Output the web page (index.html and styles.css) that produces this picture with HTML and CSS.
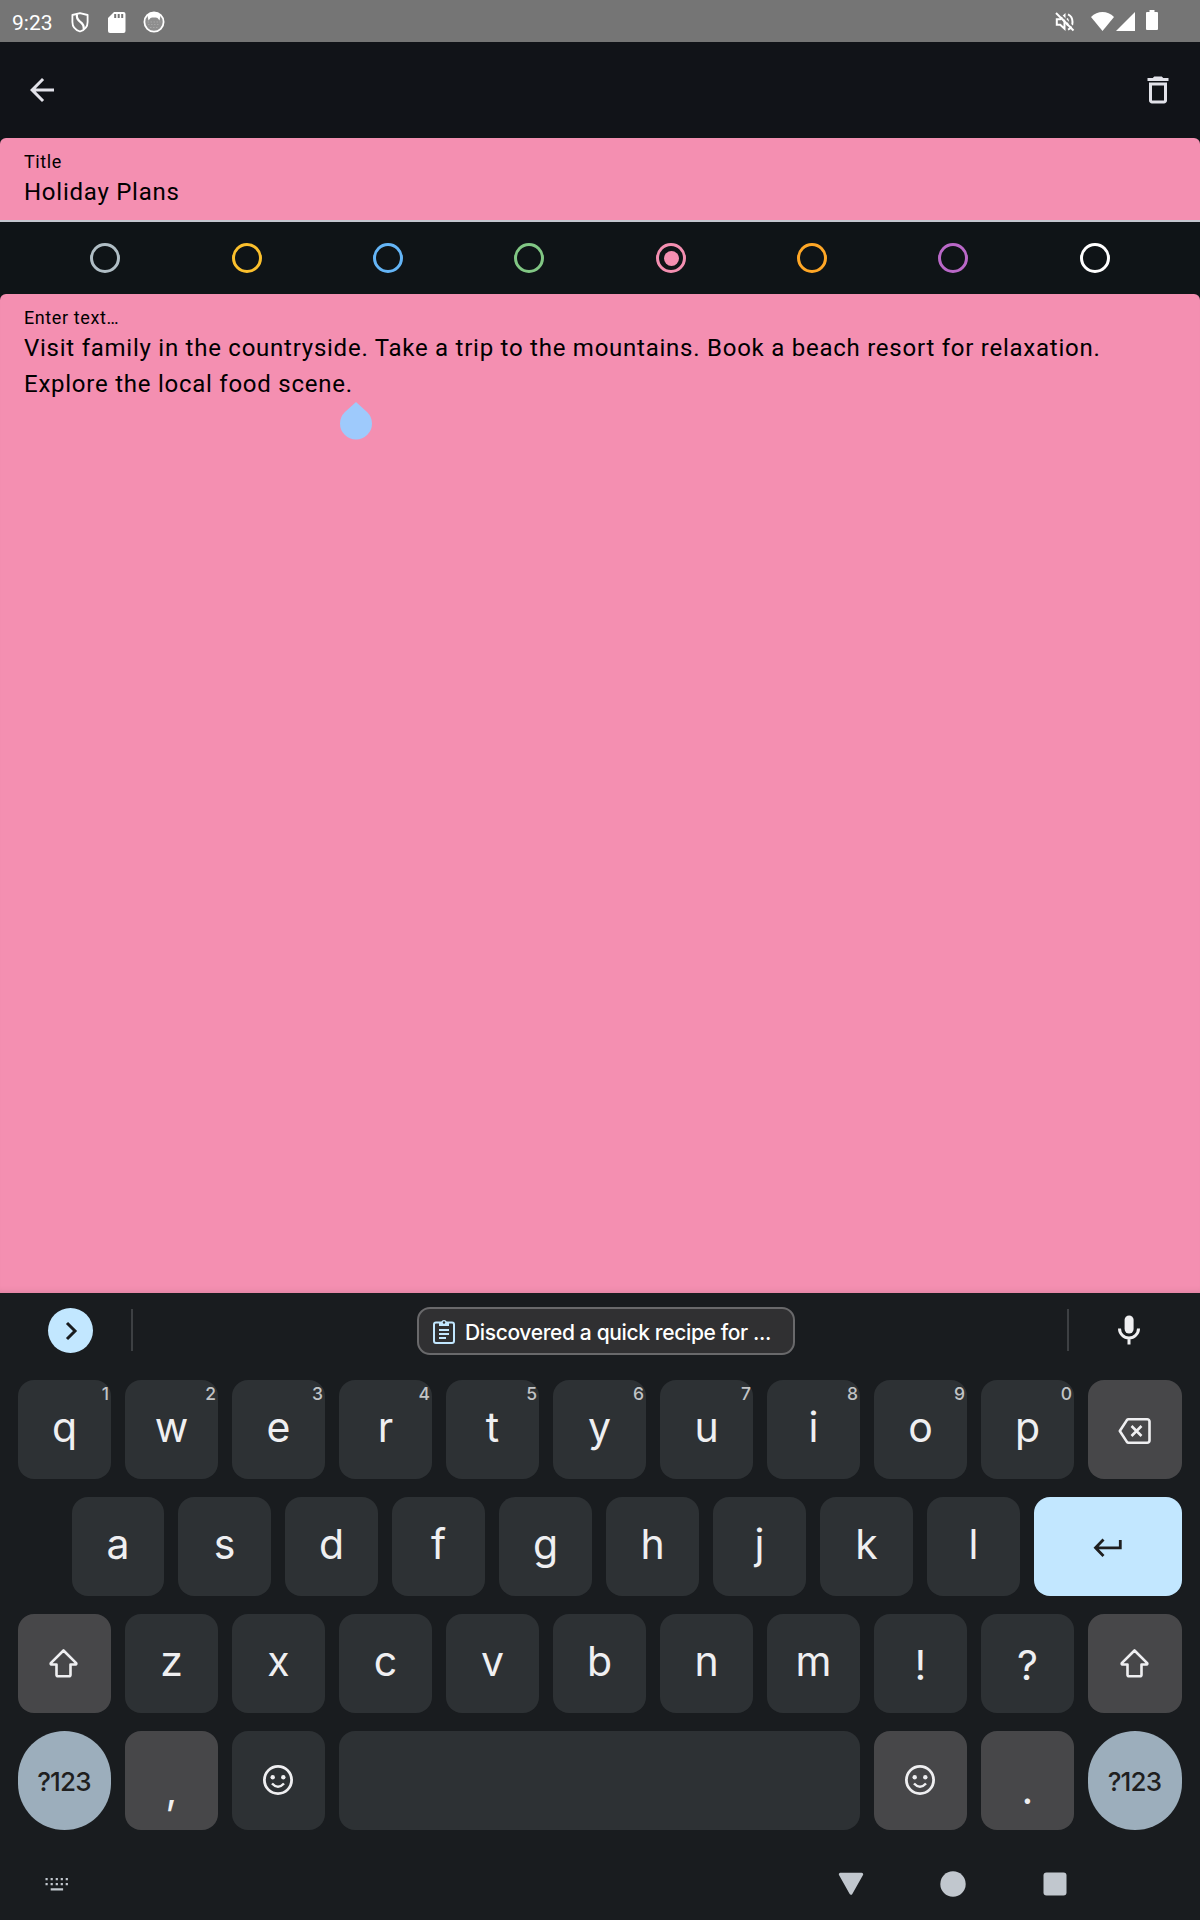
FILE: index.html
```html
<!DOCTYPE html>
<html lang="en">
<head>
<meta charset="utf-8">
<title>Holiday Plans</title>
<link rel="stylesheet" href="styles.css">
</head>
<body>
<div class="screen">
  <header class="status">
    <span class="clock">9:23</span>
    <svg class="st-shield" width="18" height="21" viewBox="0 0 18 21" fill="none" stroke="#fff" stroke-width="1.8" stroke-linejoin="round"><path d="M9 1.2 16.600 3v7c0 4.500-3 8-7.600 9.500C4.400 18 1.400 14.500 1.400 10V3z"/><path d="M6 2.300c-.8 3.400.4 5.300 3 7.300 2.800 2 4.200 4 3.600 7.400" stroke-width="2.200"/></svg>
    <svg class="st-sd" width="18" height="21" viewBox="0 0 18 21"><path fill="#fff" d="M6 0h9.500A2 2 0 0 1 17.500 2v17a2 2 0 0 1-2 2h-13.500a2 2 0 0 1-2-2V6z"/><path fill="#757575" d="M6.200 2h2v4h-2zM9.700 2h2v4h-2zM13.200 2h2v4h-2z"/></svg>
    <svg class="st-face" width="22" height="22" viewBox="0 0 22 22"><circle cx="11" cy="11" r="9.600" fill="#8e8e8e" stroke="#fff" stroke-width="1.800"/><path fill="#fff" d="M4.500 4.500C8 .5 14 .5 17.500 4.500l-1 5-2-2.500c-2-.6-5-.6-7 0l-2 2.500z"/><path stroke="#a4a4a4" stroke-width="1" stroke-dasharray="1.500 1.500" d="M4.500 11h13M5 13.500h12M7 16.500h8"/></svg>
    <span class="grow"></span>
    <svg class="st-mute" width="20" height="20" viewBox="0 0 20 20" fill="none" stroke="#fff" stroke-width="2"><path d="M1.800 7.200h3.400l4.300-4v13.600l-4.300-4H1.800z"/><path d="M12 6.500q2 3.500 0 7M13 2.300c6 2.700 6 12.700 0 15.400"/><path stroke="#757575" stroke-width="1.600" d="M3 0 20 17"/><path d="M1 1l17.500 17.500"/></svg>
    <svg class="st-wifi" width="23" height="19" viewBox="0 0 23 19"><path fill="#fff" d="M11.500 19 0 4.900C6.500-1.600 16.500-1.600 23 4.900z"/></svg>
    <svg class="st-cell" width="19" height="19" viewBox="0 0 19 19"><path fill="#fff" d="M19 0v19H0z"/></svg>
    <svg class="st-batt" width="12" height="20" viewBox="0 0 12 20"><path fill="#fff" d="M3.500 0h5v2H11a1 1 0 0 1 1 1v16a1 1 0 0 1-1 1H1a1 1 0 0 1-1-1V3a1 1 0 0 1 1-1h2.500z"/></svg>
  </header>

  <nav class="appbar">
    <svg width="36" height="36" viewBox="0 0 24 24" fill="#e2e2e9"><path d="M20 11H7.830l5.590-5.590L12 4l-8 8 8 8 1.410-1.410L7.830 13H20z"/></svg>
    <svg width="36" height="36" viewBox="0 0 24 24" fill="#e2e2e9"><path d="M6 19c0 1.100.9 2 2 2h8c1.100 0 2-.9 2-2V7H6v12zM8 9h8v10H8V9zM15.500 4l-1-1h-5l-1 1H5v2h14V4z"/></svg>
  </nav>

  <section class="field title">
    <div class="label">Title</div>
    <div class="value">Holiday Plans</div>
  </section>

  <div class="colors">
    <div class="slot"><i class="radio grey"></i></div>
    <div class="slot"><i class="radio yellow"></i></div>
    <div class="slot"><i class="radio blue"></i></div>
    <div class="slot"><i class="radio green"></i></div>
    <div class="slot"><i class="radio pink on"></i></div>
    <div class="slot"><i class="radio orange"></i></div>
    <div class="slot"><i class="radio purple"></i></div>
    <div class="slot"><i class="radio white"></i></div>
  </div>

  <section class="field note">
    <div class="label">Enter text…</div>
    <div class="value">Visit family in the countryside. Take a trip to the mountains. Book a beach resort for relaxation.<br>Explore the local food scene.<span class="caret"><svg class="handle" width="32" height="38" viewBox="0 0 32 38"><path fill="#9ecafc" d="M16 0 27.300 10.200a16 16 0 1 1-22.600 0z"/></svg></span></div>
  </section>

  <section class="keyboard">
    <div class="strip">
      <div class="expand"><svg width="45" height="45" viewBox="0 0 45 45" fill="none" stroke="#191c1e" stroke-width="3"><path d="M19 15l8 8-8 8"/></svg></div>
      <i class="rule"></i>
      <div class="middle">
        <div class="chip">
          <svg width="22" height="25" viewBox="0 0 22 25"><rect x="1" y="3.500" width="20" height="20.500" rx="2" fill="none" stroke="#c2e7ff" stroke-width="2"/><path fill="#c2e7ff" d="M6 3h2.200a3 3 0 0 1 5.600 0H16v4H6zM6 10h10v2H6zM6 14h10v2H6zM6 18h7v2H6z"/><circle cx="11" cy="3.500" r="1.200" fill="#303032"/></svg>
          <span>Discovered a quick recipe for ...</span>
        </div>
      </div>
      <i class="rule"></i>
      <svg class="mic" width="22" height="30" viewBox="0 0 22 30"><rect x="6.600" y=".5" width="9" height="18" rx="4.500" fill="#efeff1"/><path d="M1.500 13.500a9.500 9.500 0 0 0 19 0M11 23v6.500" fill="none" stroke="#efeff1" stroke-width="3"/></svg>
    </div>

    <div class="row">
      <div class="key">q<sup>1</sup></div><div class="key">w<sup>2</sup></div><div class="key">e<sup>3</sup></div><div class="key">r<sup>4</sup></div><div class="key">t<sup>5</sup></div><div class="key">y<sup>6</sup></div><div class="key">u<sup>7</sup></div><div class="key">i<sup>8</sup></div><div class="key">o<sup>9</sup></div><div class="key">p<sup>0</sup></div>
      <div class="key fn last icon"><svg width="34" height="30" viewBox="0 0 34 30" fill="none" stroke="#efeff1" stroke-width="2.600" stroke-linejoin="round"><path d="M10.500 3.300h18.700a2.300 2.300 0 0 1 2.300 2.300v18.800a2.300 2.300 0 0 1-2.300 2.300H10.500a2 2 0 0 1-1.600-.8L1.800 15l7.100-10.900a2 2 0 0 1 1.600-.8z"/><path d="M13.500 10l10 10m0-10-10 10"/></svg></div>
    </div>

    <div class="row second">
      <div class="key">a</div><div class="key">s</div><div class="key">d</div><div class="key">f</div><div class="key">g</div><div class="key">h</div><div class="key">j</div><div class="key">k</div><div class="key">l</div>
      <div class="key enter last icon"><svg width="30" height="20" viewBox="0 0 30 20" fill="none" stroke="#1f1f1f" stroke-width="2.800"><path d="M10.500 1.500 2.500 9.800l8 8.200M2.500 9.800h24.800V2"/></svg></div>
    </div>

    <div class="row">
      <div class="key fn icon"><svg class="shift" width="32" height="32" viewBox="0 0 32 32" fill="none" stroke="#efeff1" stroke-width="2.600" stroke-linejoin="round"><path d="M15.500 3.500 2.800 16.200q-.5 1 .7 1.300h5v10.300a1.500 1.500 0 0 0 1.500 1.500h11a1.500 1.500 0 0 0 1.500-1.500V17.500h5q1.200-.3.7-1.300z"/></svg></div>
      <div class="key">z</div><div class="key">x</div><div class="key">c</div><div class="key">v</div><div class="key">b</div><div class="key">n</div><div class="key">m</div><div class="key mark">!</div><div class="key mark">?</div>
      <div class="key fn last icon"><svg class="shift" width="32" height="32" viewBox="0 0 32 32" fill="none" stroke="#efeff1" stroke-width="2.600" stroke-linejoin="round"><path d="M15.500 3.500 2.800 16.200q-.5 1 .7 1.300h5v10.300a1.500 1.500 0 0 0 1.500 1.500h11a1.500 1.500 0 0 0 1.500-1.500V17.500h5q1.200-.3.7-1.300z"/></svg></div>
    </div>

    <div class="row">
      <div class="key sym">?123</div>
      <div class="key fn punct">,</div>
      <div class="key icon"><svg class="smile" width="32" height="32" viewBox="0 0 32 32" fill="none" stroke="#efeff1" stroke-width="2.800"><circle cx="16" cy="16" r="13.600"/><path d="M10 19.500q6 6.500 12 0" stroke-width="2.500"/><g fill="#efeff1" stroke="none"><circle cx="10.700" cy="13.200" r="2.200"/><circle cx="21.300" cy="13.200" r="2.200"/></g></svg></div>
      <div class="key space"></div>
      <div class="key fn icon"><svg class="smile" width="32" height="32" viewBox="0 0 32 32" fill="none" stroke="#efeff1" stroke-width="2.800"><circle cx="16" cy="16" r="13.600"/><path d="M10 19.500q6 6.500 12 0" stroke-width="2.500"/><g fill="#efeff1" stroke="none"><circle cx="10.700" cy="13.200" r="2.200"/><circle cx="21.300" cy="13.200" r="2.200"/></g></svg></div>
      <div class="key fn punct">.</div>
      <div class="key sym last">?123</div>
    </div>

    <footer class="navbar">
      <svg width="24" height="14" viewBox="0 0 24 14" fill="#c1c7ce"><path d="M.5 1h2.200v2.200H.5zM5.600 1h2.200v2.200H5.600zM10.700 1h2.200v2.200h-2.200zM15.700 1h2.200v2.200h-2.200zM20.700 1h2.200v2.200h-2.200zM.5 6h2.200v2.200H.5zM5.600 6h2.200v2.200H5.600zM10.700 6h2.200v2.200h-2.200zM15.700 6h2.200v2.200h-2.200zM20.700 6h2.200v2.200h-2.200zM5.700 11.200h12.400v2.300H5.700z"/></svg>
      <span class="grow"></span>
      <svg width="26" height="26" viewBox="0 0 26 26" fill="#c1c7ce" stroke="#c1c7ce" stroke-width="3" stroke-linejoin="round"><path d="M2.300 3.300h21.400L13 22.300z"/></svg>
      <svg width="26" height="26" viewBox="0 0 26 26" fill="#c1c7ce"><circle cx="13" cy="13" r="12.700"/></svg>
      <svg width="26" height="26" viewBox="0 0 26 26" fill="#c1c7ce"><rect x="1.500" y="1.500" width="23" height="23" rx="3"/></svg>
    </footer>
  </section>
</div>
</body>
</html>
```
FILE: styles.css
```css
* { box-sizing: border-box; }
body { margin: 0; background: #0f1417; }
svg { display: block; flex: none; }
.grow { flex: 1; }

.screen {
  width: 1200px;
  height: 1920px;
  display: flex;
  flex-direction: column;
  overflow: hidden;
  font-family: Roboto, "Liberation Sans", sans-serif;
}

/* Status bar */
.status {
  height: 42px;
  display: flex;
  align-items: flex-start;
  padding: 0 42px 0 12px;
  background: #757575;
  color: #fff;
}
.clock { width: 59px; font-size: 21px; line-height: 46px; height: 42px; }
.st-shield { margin: 12px 19px 0 0; }
.st-sd { margin: 12px 17px 0 0; }
.st-face { margin-top: 11px; }
.st-mute { margin: 12px 16px 0 0; }
.st-wifi { margin: 12px 2px 0 0; }
.st-cell { margin: 12px 11px 0 0; }
.st-batt { margin-top: 10px; }

.appbar {
  height: 96px;
  display: flex;
  align-items: center;
  justify-content: space-between;
  padding: 0 24px;
  background: #111318;
}

/* Filled text fields */
.field {
  padding: 12px 24px;
  background: #f48fb1;
  border-radius: 6px 6px 0 0;
  color: #000;
}
.title { height: 84px; border-bottom: 2px solid #c3c6cf; }
.note { flex: 1; box-shadow: inset 0 -6px 6px -5px rgba(0, 0, 0, 0.1); }
.label { font-size: 18px; line-height: 24px; letter-spacing: 0.6px; }
.value { font-size: 24px; line-height: 36px; letter-spacing: 0.75px; white-space: nowrap; }
.caret { position: relative; }
.handle { position: absolute; left: -13px; top: 32px; }

.colors {
  height: 72px;
  display: flex;
  justify-content: space-evenly;
  align-items: center;
}
.slot { width: 72px; display: flex; justify-content: center; }
.radio {
  width: 30px;
  height: 30px;
  padding: 4.5px;
  border: 3px solid currentColor;
  border-radius: 50%;
}
.on { background: currentColor content-box; }
.grey { color: #b0bec5; }
.yellow { color: #fbc02d; }
.blue { color: #64b5f6; }
.green { color: #81c784; }
.pink { color: #f48fb1; }
.orange { color: #ffa726; }
.purple { color: #ba68c8; }
.white { color: #fff; }

/* Keyboard */
.keyboard {
  height: 627px;
  display: flex;
  flex-direction: column;
  gap: 18px;
  background: #191c1f;
  font-family: Inter, Roboto, sans-serif;
}
.strip {
  height: 69px;
  display: flex;
  align-items: flex-start;
  padding: 14px 60px 0 48px;
}
.expand {
  width: 45px;
  height: 45px;
  margin: 1px 38px 0 0;
  border-radius: 50%;
  background: #c2e7ff;
}
.rule { width: 2px; height: 42px; margin-top: 2px; background: #3d4043; }
.middle { flex: 1; display: flex; justify-content: center; padding-left: 12px; }
.chip {
  width: 378px;
  height: 48px;
  display: flex;
  align-items: center;
  gap: 10px;
  padding: 0 0 0 14px;
  border: 2px solid #69696b;
  border-radius: 13px;
  background: #303032;
  color: #fff;
  font-size: 21px;
  font-weight: 500;
  letter-spacing: -0.36px;
  white-space: nowrap;
}
.chip span { padding-top: 2px; }
.mic { margin: 8px 0 0 49px; }

.row { display: flex; gap: 14px; padding: 0 18px; }
.second { padding-left: 72px; }
.second .key:first-child { width: 92px; }
.key {
  position: relative;
  flex: none;
  width: 93px;
  height: 99px;
  padding-top: 17px;
  border-radius: 16px;
  background: #2d3134;
  color: #efeff1;
  font-size: 41px;
  line-height: 60px;
  text-align: center;
}
.key sup {
  position: absolute;
  top: 2px;
  right: 2px;
  font-size: 17.5px;
  line-height: 24px;
  font-weight: 500;
  color: #c2c4c6;
}
.fn { background: #474749; }
.key.last { flex: 1; }
.icon { display: flex; align-items: center; justify-content: center; padding: 3px 0 0; }
.icon .shift { margin: -5px 1px 0 0; }
.icon .smile { margin: -4px 2px 0 0; }
.enter { background: #c2e7ff; }
.key.mark { padding-top: 21px; }
.key.punct { padding-top: 28px; }
.key.space { width: 521px; }
.key.sym {
  padding: 21px 1px 0 0;
  border-radius: 47px;
  background: #9caebc;
  color: #1f1f1f;
  font-size: 26px;
  font-weight: 500;
  letter-spacing: -0.8px;
}

.navbar {
  display: flex;
  align-items: center;
  gap: 76px;
  padding: 23px 132px 0 45px;
}
```
